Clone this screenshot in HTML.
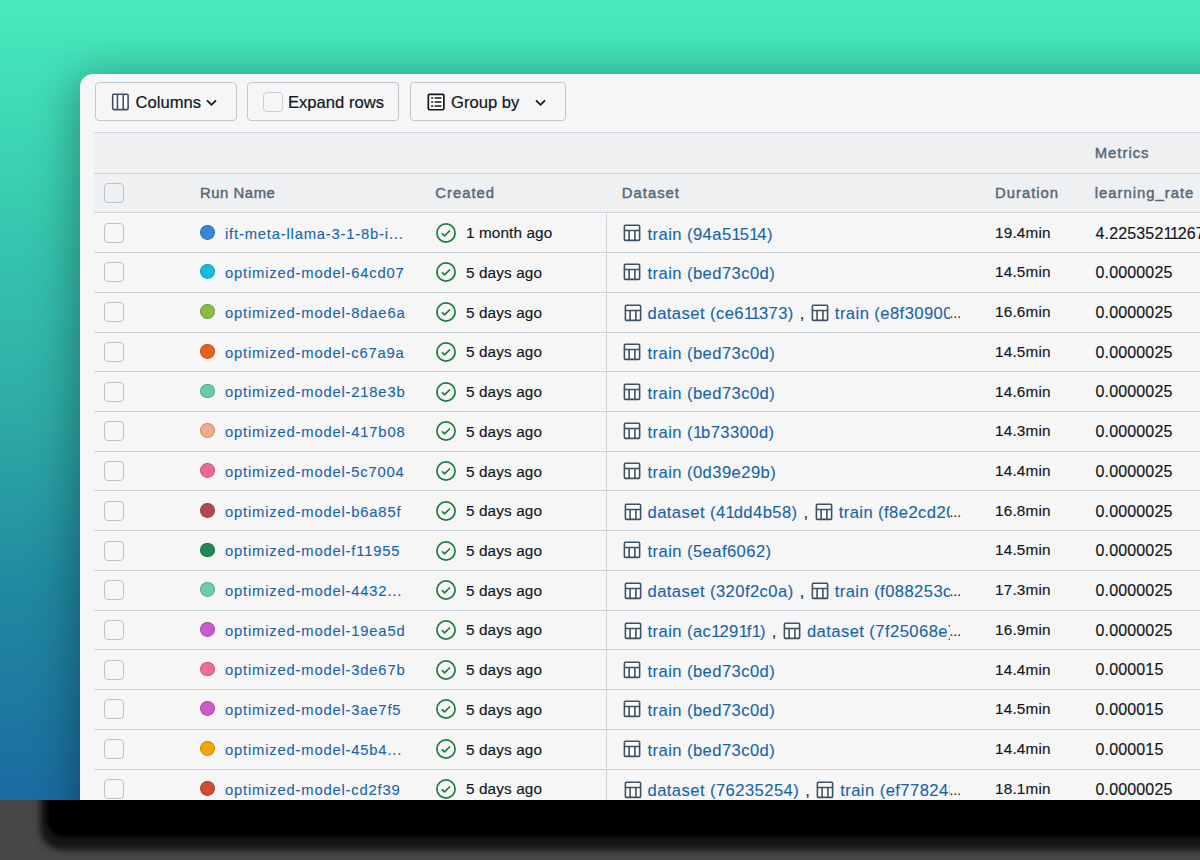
<!DOCTYPE html>
<html><head><meta charset="utf-8">
<style>
*{box-sizing:border-box;margin:0;padding:0}
html,body{width:1200px;height:860px;overflow:hidden}
body{position:relative;font-family:"Liberation Sans",sans-serif;background:linear-gradient(180deg,#47ebbd 0px,#36c7ae 230px,#2eaca6 410px,#2089a0 590px,#1a6ca0 800px);}
.a{position:absolute}
.t{position:absolute;line-height:20px;white-space:nowrap}
.shadow{position:absolute;left:80px;top:74px;width:1300px;height:760px;border-radius:13px;box-shadow:0 8px 44px 6px rgba(0,0,0,0.32)}
.panel{position:absolute;left:80px;top:74px;width:1200px;height:726px;background:#f6f6f6;border-top-left-radius:13px}
.bottom{position:absolute;left:0;top:800px;width:1200px;height:60px;background:#474747;overflow:hidden}
.bs1{position:absolute;left:40px;top:-60px;width:1300px;height:110px;background:#151515;border-radius:22px;filter:blur(3px)}
.bs2{position:absolute;left:47px;top:-60px;width:1300px;height:97px;background:#000;border-radius:18px;filter:blur(2px)}
.btn{position:absolute;top:82px;height:39px;border:1px solid #bcc6d0;border-radius:4px}
.thead{position:absolute;left:94px;top:132px;width:1106px;height:80.5px;background:#eff0f2}
.hl{position:absolute;left:94px;width:1106px;height:1px;background:#cbd2d9}
.rl{position:absolute;left:94px;width:1106px;height:1px;background:#cbd2d9}
.cb{position:absolute;left:104px;width:20px;height:20px;border:1.4px solid #bac3cc;border-radius:4px}
.dot{position:absolute;width:14.8px;height:14.8px;border-radius:50%;box-shadow:inset 0 0 0 1px rgba(0,0,0,0.18)}
.sep{position:absolute;left:606px;width:1.4px;height:38.7px;background:#cbd2d9}
.dsm{position:absolute;left:623.5px;width:326px;overflow:hidden;white-space:nowrap;line-height:20px;font-size:16.6px;letter-spacing:0.43px;color:#1764a8;-webkit-text-stroke:0.1px #1764a8}
.dsm .ic{display:inline-block;width:18px;height:18px;vertical-align:-3px;margin-right:6px}
.dsm .ic svg{display:block}
.comma{color:#11171c;-webkit-text-stroke:0.1px #11171c;margin:0 6px 0 6px}
.one{letter-spacing:-1.17px}
.ell{font-size:13.8px;color:#11171c;letter-spacing:0}
.tb{font-size:16.6px;letter-spacing:0px;color:#11171c;font-weight:400;-webkit-text-stroke:0.2px #11171c}
.hd{font-size:14.85px;letter-spacing:1.0px;color:#56697a;font-weight:400;-webkit-text-stroke:0.45px #56697a}
.name{font-size:14.8px;letter-spacing:0.8px;color:#1764a8;font-weight:400;-webkit-text-stroke:0.1px #1764a8}
.created{font-size:15.3px;letter-spacing:0.12px;color:#11171c;font-weight:400;-webkit-text-stroke:0.15px #11171c}
.ds{font-size:16.6px;letter-spacing:0.43px;color:#1764a8;font-weight:400;-webkit-text-stroke:0.1px #1764a8}
.dur{font-size:15.3px;letter-spacing:0.2px;color:#11171c;font-weight:400;-webkit-text-stroke:0.15px #11171c}
.lr{font-size:16px;letter-spacing:0.15px;color:#11171c;font-weight:400;-webkit-text-stroke:0.15px #11171c}

</style></head><body>
<div class="shadow"></div>
<div class="panel"></div>
<div class="btn" style="left:94.5px;width:142.5px"></div>
<svg class="a" style="left:111px;top:92.5px" width="18" height="18" viewBox="0 0 18 18"><rect x="1.7" y="1.2" width="15.4" height="15.4" rx="1" fill="#fff" stroke="#3e5162" stroke-width="1.6"/><path d="M6.45 1.2V16.6M12.26 1.2V16.6" stroke="#3e5162" stroke-width="1.6"/></svg>
<div class="t tb" style="left:135.5px;top:92.65px">Columns</div>
<svg class="a" style="left:206px;top:98.5px" width="11" height="8" viewBox="0 0 11 8"><path d="M1 1.3L5.5 5.8L10 1.3" fill="none" stroke="#11171c" stroke-width="1.7"/></svg>
<div class="btn" style="left:247px;width:152px"></div>
<div class="cb" style="left:263px;top:92px;border-color:#c6cdd5"></div>
<div class="t tb" style="left:288px;top:92.65px">Expand rows</div>
<div class="btn" style="left:410px;width:156px"></div>
<svg class="a" style="left:426.5px;top:92.5px" width="18" height="18" viewBox="0 0 18 18"><rect x="1.35" y="1.35" width="15.5" height="15.4" rx="1.2" fill="#fff" stroke="#11171c" stroke-width="1.7"/><path d="M4.8 5H5.6M4.8 9H5.6M4.8 13H5.6M8.3 5H13.8M8.3 9H13.8M8.3 13H13.8" stroke="#11171c" stroke-width="1.7" stroke-linecap="round"/></svg>
<div class="t tb" style="left:451px;top:92.65px">Group by</div>
<svg class="a" style="left:534.5px;top:98.5px" width="11" height="8" viewBox="0 0 11 8"><path d="M1 1.3L5.5 5.8L10 1.3" fill="none" stroke="#11171c" stroke-width="1.7"/></svg>
<div class="thead"></div>
<div class="hl" style="top:132px"></div>
<div class="hl" style="top:172.6px"></div>
<div class="cb" style="top:183px"></div>
<div class="t hd" style="left:1094.7px;top:143.15px">Metrics</div>
<div class="t hd" style="left:200px;top:183.25px;letter-spacing:0.55px">Run Name</div>
<div class="t hd" style="left:435.3px;top:183.25px">Created</div>
<div class="t hd" style="left:621.8px;top:183.25px">Dataset</div>
<div class="t hd" style="left:995px;top:183.25px">Duration</div>
<div class="t hd" style="left:1094.7px;top:183.25px">learning_rate</div>
<div class="rl" style="top:212.45px"></div><div class="cb" style="top:222.75px"></div><div class="dot" style="left:200px;top:224.75px;background:#3a86d6"></div><div class="t name" style="left:225px;top:223.52px">ift-meta-llama-3-1-8b-i...</div><svg class="a" style="left:436px;top:222.75px" width="20" height="20" viewBox="0 0 20 20"><circle cx="10" cy="10" r="9.1" fill="none" stroke="#1f7a3e" stroke-width="1.7"/><path d="M5.9 10.3L8.6 12.9L14 7.5" fill="none" stroke="#1f7a3e" stroke-width="1.7"/></svg><div class="t created" style="left:466px;top:223.25px">1 month ago</div><div class="sep" style="top:213.45px"></div><svg class="a" style="left:623px;top:223.65px" width="18" height="18" viewBox="0 0 18 18"><rect x="1.4" y="1.2" width="15.2" height="15.2" rx="1" fill="#fff" stroke="#3e5162" stroke-width="1.6"/><path d="M1.4 6.5H16.6M6.1 6.5V16.4M11.9 6.5V16.4" stroke="#3e5162" stroke-width="1.6" fill="none"/></svg><div class="t ds" style="left:647.5px;top:224.70px">train (94a5<span class="one">1</span>5<span class="one">1</span>4)</div><div class="t dur" style="left:995px;top:222.65px">19.4min</div><div class="t lr" style="left:1095.5px;top:223.51px">4.225352<span class="one">1</span><span class="one">1</span>267</div><div class="rl" style="top:252.17px"></div><div class="cb" style="top:262.47px"></div><div class="dot" style="left:200px;top:264.47px;background:#16bcd6"></div><div class="t name" style="left:225px;top:263.24px">optimized-model-64cd07</div><svg class="a" style="left:436px;top:262.47px" width="20" height="20" viewBox="0 0 20 20"><circle cx="10" cy="10" r="9.1" fill="none" stroke="#1f7a3e" stroke-width="1.7"/><path d="M5.9 10.3L8.6 12.9L14 7.5" fill="none" stroke="#1f7a3e" stroke-width="1.7"/></svg><div class="t created" style="left:466px;top:262.97px">5 days ago</div><div class="sep" style="top:253.17px"></div><svg class="a" style="left:623px;top:263.37px" width="18" height="18" viewBox="0 0 18 18"><rect x="1.4" y="1.2" width="15.2" height="15.2" rx="1" fill="#fff" stroke="#3e5162" stroke-width="1.6"/><path d="M1.4 6.5H16.6M6.1 6.5V16.4M11.9 6.5V16.4" stroke="#3e5162" stroke-width="1.6" fill="none"/></svg><div class="t ds" style="left:647.5px;top:264.42px">train (bed73c0d)</div><div class="t dur" style="left:995px;top:262.37px">14.5min</div><div class="t lr" style="left:1095.5px;top:263.23px">0.0000025</div><div class="rl" style="top:291.89px"></div><div class="cb" style="top:302.19px"></div><div class="dot" style="left:200px;top:304.19px;background:#8bbd45"></div><div class="t name" style="left:225px;top:302.96px">optimized-model-8dae6a</div><svg class="a" style="left:436px;top:302.19px" width="20" height="20" viewBox="0 0 20 20"><circle cx="10" cy="10" r="9.1" fill="none" stroke="#1f7a3e" stroke-width="1.7"/><path d="M5.9 10.3L8.6 12.9L14 7.5" fill="none" stroke="#1f7a3e" stroke-width="1.7"/></svg><div class="t created" style="left:466px;top:302.69px">5 days ago</div><div class="sep" style="top:292.89px"></div><div class="dsm" style="top:304.14px"><span class="ic"><svg width="18" height="18" viewBox="0 0 18 18"><rect x="1.4" y="1.2" width="15.2" height="15.2" rx="1" fill="#fff" stroke="#3e5162" stroke-width="1.6"/><path d="M1.4 6.5H16.6M6.1 6.5V16.4M11.9 6.5V16.4" stroke="#3e5162" stroke-width="1.6" fill="none"/></svg></span><span>dataset (ce6<span class="one">1</span><span class="one">1</span>373)</span><span class="comma">,</span><span class="ic"><svg width="18" height="18" viewBox="0 0 18 18"><rect x="1.4" y="1.2" width="15.2" height="15.2" rx="1" fill="#fff" stroke="#3e5162" stroke-width="1.6"/><path d="M1.4 6.5H16.6M6.1 6.5V16.4M11.9 6.5V16.4" stroke="#3e5162" stroke-width="1.6" fill="none"/></svg></span><span>train (e8f30900)</span></div><div class="t ell" style="left:949.5px;top:304.14px">...</div><div class="t dur" style="left:995px;top:302.09px">16.6min</div><div class="t lr" style="left:1095.5px;top:302.95px">0.0000025</div><div class="rl" style="top:331.61px"></div><div class="cb" style="top:341.91px"></div><div class="dot" style="left:200px;top:343.91px;background:#ea6022"></div><div class="t name" style="left:225px;top:342.68px">optimized-model-c67a9a</div><svg class="a" style="left:436px;top:341.91px" width="20" height="20" viewBox="0 0 20 20"><circle cx="10" cy="10" r="9.1" fill="none" stroke="#1f7a3e" stroke-width="1.7"/><path d="M5.9 10.3L8.6 12.9L14 7.5" fill="none" stroke="#1f7a3e" stroke-width="1.7"/></svg><div class="t created" style="left:466px;top:342.41px">5 days ago</div><div class="sep" style="top:332.61px"></div><svg class="a" style="left:623px;top:342.81px" width="18" height="18" viewBox="0 0 18 18"><rect x="1.4" y="1.2" width="15.2" height="15.2" rx="1" fill="#fff" stroke="#3e5162" stroke-width="1.6"/><path d="M1.4 6.5H16.6M6.1 6.5V16.4M11.9 6.5V16.4" stroke="#3e5162" stroke-width="1.6" fill="none"/></svg><div class="t ds" style="left:647.5px;top:343.86px">train (bed73c0d)</div><div class="t dur" style="left:995px;top:341.81px">14.5min</div><div class="t lr" style="left:1095.5px;top:342.67px">0.0000025</div><div class="rl" style="top:371.33px"></div><div class="cb" style="top:381.63px"></div><div class="dot" style="left:200px;top:383.63px;background:#6ccab0"></div><div class="t name" style="left:225px;top:382.40px">optimized-model-218e3b</div><svg class="a" style="left:436px;top:381.63px" width="20" height="20" viewBox="0 0 20 20"><circle cx="10" cy="10" r="9.1" fill="none" stroke="#1f7a3e" stroke-width="1.7"/><path d="M5.9 10.3L8.6 12.9L14 7.5" fill="none" stroke="#1f7a3e" stroke-width="1.7"/></svg><div class="t created" style="left:466px;top:382.13px">5 days ago</div><div class="sep" style="top:372.33px"></div><svg class="a" style="left:623px;top:382.53px" width="18" height="18" viewBox="0 0 18 18"><rect x="1.4" y="1.2" width="15.2" height="15.2" rx="1" fill="#fff" stroke="#3e5162" stroke-width="1.6"/><path d="M1.4 6.5H16.6M6.1 6.5V16.4M11.9 6.5V16.4" stroke="#3e5162" stroke-width="1.6" fill="none"/></svg><div class="t ds" style="left:647.5px;top:383.58px">train (bed73c0d)</div><div class="t dur" style="left:995px;top:381.53px">14.6min</div><div class="t lr" style="left:1095.5px;top:382.39px">0.0000025</div><div class="rl" style="top:411.05px"></div><div class="cb" style="top:421.35px"></div><div class="dot" style="left:200px;top:423.35px;background:#f0ab88"></div><div class="t name" style="left:225px;top:422.12px">optimized-model-417b08</div><svg class="a" style="left:436px;top:421.35px" width="20" height="20" viewBox="0 0 20 20"><circle cx="10" cy="10" r="9.1" fill="none" stroke="#1f7a3e" stroke-width="1.7"/><path d="M5.9 10.3L8.6 12.9L14 7.5" fill="none" stroke="#1f7a3e" stroke-width="1.7"/></svg><div class="t created" style="left:466px;top:421.85px">5 days ago</div><div class="sep" style="top:412.05px"></div><svg class="a" style="left:623px;top:422.25px" width="18" height="18" viewBox="0 0 18 18"><rect x="1.4" y="1.2" width="15.2" height="15.2" rx="1" fill="#fff" stroke="#3e5162" stroke-width="1.6"/><path d="M1.4 6.5H16.6M6.1 6.5V16.4M11.9 6.5V16.4" stroke="#3e5162" stroke-width="1.6" fill="none"/></svg><div class="t ds" style="left:647.5px;top:423.30px">train (<span class="one">1</span>b73300d)</div><div class="t dur" style="left:995px;top:421.25px">14.3min</div><div class="t lr" style="left:1095.5px;top:422.11px">0.0000025</div><div class="rl" style="top:450.77px"></div><div class="cb" style="top:461.07px"></div><div class="dot" style="left:200px;top:463.07px;background:#ec6a9a"></div><div class="t name" style="left:225px;top:461.84px">optimized-model-5c7004</div><svg class="a" style="left:436px;top:461.07px" width="20" height="20" viewBox="0 0 20 20"><circle cx="10" cy="10" r="9.1" fill="none" stroke="#1f7a3e" stroke-width="1.7"/><path d="M5.9 10.3L8.6 12.9L14 7.5" fill="none" stroke="#1f7a3e" stroke-width="1.7"/></svg><div class="t created" style="left:466px;top:461.57px">5 days ago</div><div class="sep" style="top:451.77px"></div><svg class="a" style="left:623px;top:461.97px" width="18" height="18" viewBox="0 0 18 18"><rect x="1.4" y="1.2" width="15.2" height="15.2" rx="1" fill="#fff" stroke="#3e5162" stroke-width="1.6"/><path d="M1.4 6.5H16.6M6.1 6.5V16.4M11.9 6.5V16.4" stroke="#3e5162" stroke-width="1.6" fill="none"/></svg><div class="t ds" style="left:647.5px;top:463.02px">train (0d39e29b)</div><div class="t dur" style="left:995px;top:460.97px">14.4min</div><div class="t lr" style="left:1095.5px;top:461.83px">0.0000025</div><div class="rl" style="top:490.49px"></div><div class="cb" style="top:500.79px"></div><div class="dot" style="left:200px;top:502.79px;background:#b34a4a"></div><div class="t name" style="left:225px;top:501.56px">optimized-model-b6a85f</div><svg class="a" style="left:436px;top:500.79px" width="20" height="20" viewBox="0 0 20 20"><circle cx="10" cy="10" r="9.1" fill="none" stroke="#1f7a3e" stroke-width="1.7"/><path d="M5.9 10.3L8.6 12.9L14 7.5" fill="none" stroke="#1f7a3e" stroke-width="1.7"/></svg><div class="t created" style="left:466px;top:501.29px">5 days ago</div><div class="sep" style="top:491.49px"></div><div class="dsm" style="top:502.74px"><span class="ic"><svg width="18" height="18" viewBox="0 0 18 18"><rect x="1.4" y="1.2" width="15.2" height="15.2" rx="1" fill="#fff" stroke="#3e5162" stroke-width="1.6"/><path d="M1.4 6.5H16.6M6.1 6.5V16.4M11.9 6.5V16.4" stroke="#3e5162" stroke-width="1.6" fill="none"/></svg></span><span>dataset (4<span class="one">1</span>dd4b58)</span><span class="comma">,</span><span class="ic"><svg width="18" height="18" viewBox="0 0 18 18"><rect x="1.4" y="1.2" width="15.2" height="15.2" rx="1" fill="#fff" stroke="#3e5162" stroke-width="1.6"/><path d="M1.4 6.5H16.6M6.1 6.5V16.4M11.9 6.5V16.4" stroke="#3e5162" stroke-width="1.6" fill="none"/></svg></span><span>train (f8e2cd20)</span></div><div class="t ell" style="left:949.5px;top:502.74px">...</div><div class="t dur" style="left:995px;top:500.69px">16.8min</div><div class="t lr" style="left:1095.5px;top:501.55px">0.0000025</div><div class="rl" style="top:530.21px"></div><div class="cb" style="top:540.51px"></div><div class="dot" style="left:200px;top:542.51px;background:#1e8a52"></div><div class="t name" style="left:225px;top:541.28px">optimized-model-f11955</div><svg class="a" style="left:436px;top:540.51px" width="20" height="20" viewBox="0 0 20 20"><circle cx="10" cy="10" r="9.1" fill="none" stroke="#1f7a3e" stroke-width="1.7"/><path d="M5.9 10.3L8.6 12.9L14 7.5" fill="none" stroke="#1f7a3e" stroke-width="1.7"/></svg><div class="t created" style="left:466px;top:541.01px">5 days ago</div><div class="sep" style="top:531.21px"></div><svg class="a" style="left:623px;top:541.41px" width="18" height="18" viewBox="0 0 18 18"><rect x="1.4" y="1.2" width="15.2" height="15.2" rx="1" fill="#fff" stroke="#3e5162" stroke-width="1.6"/><path d="M1.4 6.5H16.6M6.1 6.5V16.4M11.9 6.5V16.4" stroke="#3e5162" stroke-width="1.6" fill="none"/></svg><div class="t ds" style="left:647.5px;top:542.46px">train (5eaf6062)</div><div class="t dur" style="left:995px;top:540.41px">14.5min</div><div class="t lr" style="left:1095.5px;top:541.27px">0.0000025</div><div class="rl" style="top:569.93px"></div><div class="cb" style="top:580.23px"></div><div class="dot" style="left:200px;top:582.23px;background:#6ccab5"></div><div class="t name" style="left:225px;top:581.00px">optimized-model-4432...</div><svg class="a" style="left:436px;top:580.23px" width="20" height="20" viewBox="0 0 20 20"><circle cx="10" cy="10" r="9.1" fill="none" stroke="#1f7a3e" stroke-width="1.7"/><path d="M5.9 10.3L8.6 12.9L14 7.5" fill="none" stroke="#1f7a3e" stroke-width="1.7"/></svg><div class="t created" style="left:466px;top:580.73px">5 days ago</div><div class="sep" style="top:570.93px"></div><div class="dsm" style="top:582.18px"><span class="ic"><svg width="18" height="18" viewBox="0 0 18 18"><rect x="1.4" y="1.2" width="15.2" height="15.2" rx="1" fill="#fff" stroke="#3e5162" stroke-width="1.6"/><path d="M1.4 6.5H16.6M6.1 6.5V16.4M11.9 6.5V16.4" stroke="#3e5162" stroke-width="1.6" fill="none"/></svg></span><span>dataset (320f2c0a)</span><span class="comma">,</span><span class="ic"><svg width="18" height="18" viewBox="0 0 18 18"><rect x="1.4" y="1.2" width="15.2" height="15.2" rx="1" fill="#fff" stroke="#3e5162" stroke-width="1.6"/><path d="M1.4 6.5H16.6M6.1 6.5V16.4M11.9 6.5V16.4" stroke="#3e5162" stroke-width="1.6" fill="none"/></svg></span><span>train (f088253c)</span></div><div class="t ell" style="left:949.5px;top:582.18px">...</div><div class="t dur" style="left:995px;top:580.13px">17.3min</div><div class="t lr" style="left:1095.5px;top:580.99px">0.0000025</div><div class="rl" style="top:609.65px"></div><div class="cb" style="top:619.95px"></div><div class="dot" style="left:200px;top:621.95px;background:#cc5ac8"></div><div class="t name" style="left:225px;top:620.72px">optimized-model-19ea5d</div><svg class="a" style="left:436px;top:619.95px" width="20" height="20" viewBox="0 0 20 20"><circle cx="10" cy="10" r="9.1" fill="none" stroke="#1f7a3e" stroke-width="1.7"/><path d="M5.9 10.3L8.6 12.9L14 7.5" fill="none" stroke="#1f7a3e" stroke-width="1.7"/></svg><div class="t created" style="left:466px;top:620.45px">5 days ago</div><div class="sep" style="top:610.65px"></div><div class="dsm" style="top:621.90px"><span class="ic"><svg width="18" height="18" viewBox="0 0 18 18"><rect x="1.4" y="1.2" width="15.2" height="15.2" rx="1" fill="#fff" stroke="#3e5162" stroke-width="1.6"/><path d="M1.4 6.5H16.6M6.1 6.5V16.4M11.9 6.5V16.4" stroke="#3e5162" stroke-width="1.6" fill="none"/></svg></span><span>train (ac<span class="one">1</span>29<span class="one">1</span>f<span class="one">1</span>)</span><span class="comma">,</span><span class="ic"><svg width="18" height="18" viewBox="0 0 18 18"><rect x="1.4" y="1.2" width="15.2" height="15.2" rx="1" fill="#fff" stroke="#3e5162" stroke-width="1.6"/><path d="M1.4 6.5H16.6M6.1 6.5V16.4M11.9 6.5V16.4" stroke="#3e5162" stroke-width="1.6" fill="none"/></svg></span><span>dataset (7f25068e)</span></div><div class="t ell" style="left:949.5px;top:621.90px">...</div><div class="t dur" style="left:995px;top:619.85px">16.9min</div><div class="t lr" style="left:1095.5px;top:620.71px">0.0000025</div><div class="rl" style="top:649.37px"></div><div class="cb" style="top:659.67px"></div><div class="dot" style="left:200px;top:661.67px;background:#ef6d96"></div><div class="t name" style="left:225px;top:660.44px">optimized-model-3de67b</div><svg class="a" style="left:436px;top:659.67px" width="20" height="20" viewBox="0 0 20 20"><circle cx="10" cy="10" r="9.1" fill="none" stroke="#1f7a3e" stroke-width="1.7"/><path d="M5.9 10.3L8.6 12.9L14 7.5" fill="none" stroke="#1f7a3e" stroke-width="1.7"/></svg><div class="t created" style="left:466px;top:660.17px">5 days ago</div><div class="sep" style="top:650.37px"></div><svg class="a" style="left:623px;top:660.57px" width="18" height="18" viewBox="0 0 18 18"><rect x="1.4" y="1.2" width="15.2" height="15.2" rx="1" fill="#fff" stroke="#3e5162" stroke-width="1.6"/><path d="M1.4 6.5H16.6M6.1 6.5V16.4M11.9 6.5V16.4" stroke="#3e5162" stroke-width="1.6" fill="none"/></svg><div class="t ds" style="left:647.5px;top:661.62px">train (bed73c0d)</div><div class="t dur" style="left:995px;top:659.57px">14.4min</div><div class="t lr" style="left:1095.5px;top:660.43px">0.000015</div><div class="rl" style="top:689.09px"></div><div class="cb" style="top:699.39px"></div><div class="dot" style="left:200px;top:701.39px;background:#cc5ac8"></div><div class="t name" style="left:225px;top:700.16px">optimized-model-3ae7f5</div><svg class="a" style="left:436px;top:699.39px" width="20" height="20" viewBox="0 0 20 20"><circle cx="10" cy="10" r="9.1" fill="none" stroke="#1f7a3e" stroke-width="1.7"/><path d="M5.9 10.3L8.6 12.9L14 7.5" fill="none" stroke="#1f7a3e" stroke-width="1.7"/></svg><div class="t created" style="left:466px;top:699.89px">5 days ago</div><div class="sep" style="top:690.09px"></div><svg class="a" style="left:623px;top:700.29px" width="18" height="18" viewBox="0 0 18 18"><rect x="1.4" y="1.2" width="15.2" height="15.2" rx="1" fill="#fff" stroke="#3e5162" stroke-width="1.6"/><path d="M1.4 6.5H16.6M6.1 6.5V16.4M11.9 6.5V16.4" stroke="#3e5162" stroke-width="1.6" fill="none"/></svg><div class="t ds" style="left:647.5px;top:701.34px">train (bed73c0d)</div><div class="t dur" style="left:995px;top:699.29px">14.5min</div><div class="t lr" style="left:1095.5px;top:700.15px">0.000015</div><div class="rl" style="top:728.81px"></div><div class="cb" style="top:739.11px"></div><div class="dot" style="left:200px;top:741.11px;background:#eca80e"></div><div class="t name" style="left:225px;top:739.88px">optimized-model-45b4...</div><svg class="a" style="left:436px;top:739.11px" width="20" height="20" viewBox="0 0 20 20"><circle cx="10" cy="10" r="9.1" fill="none" stroke="#1f7a3e" stroke-width="1.7"/><path d="M5.9 10.3L8.6 12.9L14 7.5" fill="none" stroke="#1f7a3e" stroke-width="1.7"/></svg><div class="t created" style="left:466px;top:739.61px">5 days ago</div><div class="sep" style="top:729.81px"></div><svg class="a" style="left:623px;top:740.01px" width="18" height="18" viewBox="0 0 18 18"><rect x="1.4" y="1.2" width="15.2" height="15.2" rx="1" fill="#fff" stroke="#3e5162" stroke-width="1.6"/><path d="M1.4 6.5H16.6M6.1 6.5V16.4M11.9 6.5V16.4" stroke="#3e5162" stroke-width="1.6" fill="none"/></svg><div class="t ds" style="left:647.5px;top:741.06px">train (bed73c0d)</div><div class="t dur" style="left:995px;top:739.01px">14.4min</div><div class="t lr" style="left:1095.5px;top:739.87px">0.000015</div><div class="rl" style="top:768.53px"></div><div class="cb" style="top:778.83px"></div><div class="dot" style="left:200px;top:780.83px;background:#d44b34"></div><div class="t name" style="left:225px;top:779.60px">optimized-model-cd2f39</div><svg class="a" style="left:436px;top:778.83px" width="20" height="20" viewBox="0 0 20 20"><circle cx="10" cy="10" r="9.1" fill="none" stroke="#1f7a3e" stroke-width="1.7"/><path d="M5.9 10.3L8.6 12.9L14 7.5" fill="none" stroke="#1f7a3e" stroke-width="1.7"/></svg><div class="t created" style="left:466px;top:779.33px">5 days ago</div><div class="sep" style="top:769.53px"></div><div class="dsm" style="top:780.78px"><span class="ic"><svg width="18" height="18" viewBox="0 0 18 18"><rect x="1.4" y="1.2" width="15.2" height="15.2" rx="1" fill="#fff" stroke="#3e5162" stroke-width="1.6"/><path d="M1.4 6.5H16.6M6.1 6.5V16.4M11.9 6.5V16.4" stroke="#3e5162" stroke-width="1.6" fill="none"/></svg></span><span>dataset (76235254)</span><span class="comma">,</span><span class="ic"><svg width="18" height="18" viewBox="0 0 18 18"><rect x="1.4" y="1.2" width="15.2" height="15.2" rx="1" fill="#fff" stroke="#3e5162" stroke-width="1.6"/><path d="M1.4 6.5H16.6M6.1 6.5V16.4M11.9 6.5V16.4" stroke="#3e5162" stroke-width="1.6" fill="none"/></svg></span><span>train (ef778248)</span></div><div class="t ell" style="left:949.5px;top:780.78px">...</div><div class="t dur" style="left:995px;top:778.73px">18.1min</div><div class="t lr" style="left:1095.5px;top:779.59px">0.0000025</div>
<div class="bottom"><div class="bs1"></div><div class="bs2"></div></div>
</body></html>
